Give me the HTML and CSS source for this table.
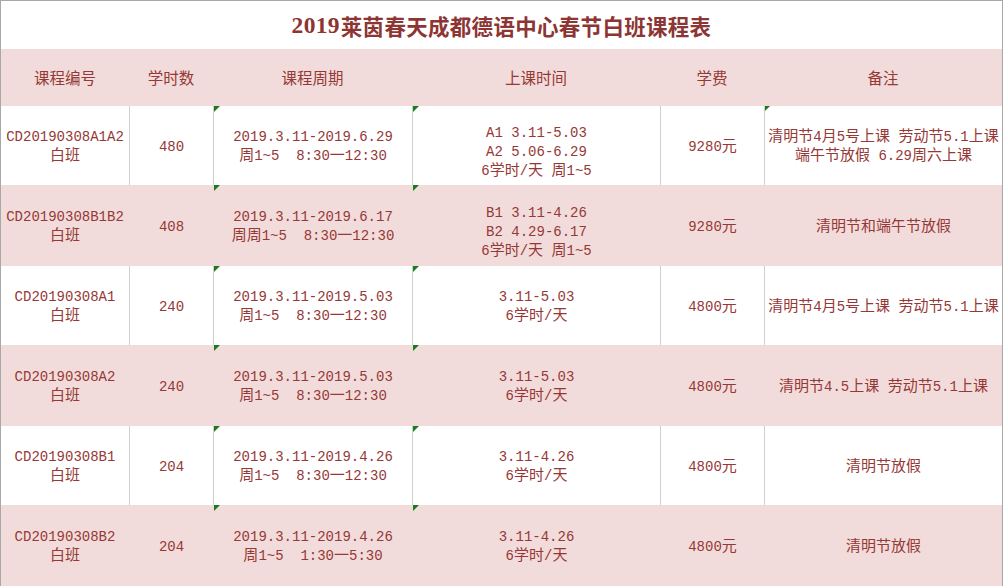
FILE: index.html
```html
<!DOCTYPE html>
<html lang="zh-CN">
<head>
<meta charset="utf-8">
<title>2019莱茵春天成都德语中心春节白班课程表</title>
<link rel="stylesheet" href="styles.css">
</head>
<body>
<div class="sheet">
  <div class="title"><span class="num">2019</span>莱茵春天成都德语中心春节白班课程表</div>

  <div class="row head">
    <div class="cell">课程编号</div>
    <div class="cell">学时数</div>
    <div class="cell">课程周期</div>
    <div class="cell">上课时间</div>
    <div class="cell">学费</div>
    <div class="cell">备注</div>
  </div>

  <div class="row white r79">
    <div class="cell"><div>CD20190308A1A2</div><div><span class="c">白班</span></div></div>
    <div class="cell"><div>480</div></div>
    <div class="cell flag"><div>2019.3.11-2019.6.29</div><div><span class="c">周</span>1~5  8:30<span class="c">一</span>12:30</div></div>
    <div class="cell flag tri"><div>A1 3.11-5.03</div><div>A2 5.06-6.29</div><div>6<span class="c">学时</span>/<span class="c">天</span> <span class="c">周</span>1~5</div></div>
    <div class="cell"><div>9280<span class="c">元</span></div></div>
    <div class="cell flag small"><div><span class="c">清明节</span>4<span class="c">月</span>5<span class="c">号上课</span> <span class="c">劳动节</span>5.1<span class="c">上课</span></div><div><span class="c">端午节放假</span> 6.29<span class="c">周六上课</span></div></div>
  </div>

  <div class="row pink r81">
    <div class="cell"><div>CD20190308B1B2</div><div><span class="c">白班</span></div></div>
    <div class="cell"><div>408</div></div>
    <div class="cell flag"><div>2019.3.11-2019.6.17</div><div><span class="c">周周</span>1~5  8:30<span class="c">一</span>12:30</div></div>
    <div class="cell flag tri"><div>B1 3.11-4.26</div><div>B2 4.29-6.17</div><div>6<span class="c">学时</span>/<span class="c">天</span> <span class="c">周</span>1~5</div></div>
    <div class="cell"><div>9280<span class="c">元</span></div></div>
    <div class="cell"><div><span class="c">清明节和端午节放假</span></div></div>
  </div>

  <div class="row white r79">
    <div class="cell"><div>CD20190308A1</div><div><span class="c">白班</span></div></div>
    <div class="cell"><div>240</div></div>
    <div class="cell flag"><div>2019.3.11-2019.5.03</div><div><span class="c">周</span>1~5  8:30<span class="c">一</span>12:30</div></div>
    <div class="cell flag"><div>3.11-5.03</div><div>6<span class="c">学时</span>/<span class="c">天</span></div></div>
    <div class="cell"><div>4800<span class="c">元</span></div></div>
    <div class="cell"><div><span class="c">清明节</span>4<span class="c">月</span>5<span class="c">号上课</span> <span class="c">劳动节</span>5.1<span class="c">上课</span></div></div>
  </div>

  <div class="row pink r81">
    <div class="cell"><div>CD20190308A2</div><div><span class="c">白班</span></div></div>
    <div class="cell"><div>240</div></div>
    <div class="cell flag"><div>2019.3.11-2019.5.03</div><div><span class="c">周</span>1~5  8:30<span class="c">一</span>12:30</div></div>
    <div class="cell flag"><div>3.11-5.03</div><div>6<span class="c">学时</span>/<span class="c">天</span></div></div>
    <div class="cell"><div>4800<span class="c">元</span></div></div>
    <div class="cell"><div><span class="c">清明节</span>4.5<span class="c">上课</span> <span class="c">劳动节</span>5.1<span class="c">上课</span></div></div>
  </div>

  <div class="row white r79">
    <div class="cell"><div>CD20190308B1</div><div><span class="c">白班</span></div></div>
    <div class="cell"><div>204</div></div>
    <div class="cell flag"><div>2019.3.11-2019.4.26</div><div><span class="c">周</span>1~5  8:30<span class="c">一</span>12:30</div></div>
    <div class="cell flag"><div>3.11-4.26</div><div>6<span class="c">学时</span>/<span class="c">天</span></div></div>
    <div class="cell"><div>4800<span class="c">元</span></div></div>
    <div class="cell"><div><span class="c">清明节放假</span></div></div>
  </div>

  <div class="row pink r81">
    <div class="cell"><div>CD20190308B2</div><div><span class="c">白班</span></div></div>
    <div class="cell"><div>204</div></div>
    <div class="cell flag"><div>2019.3.11-2019.4.26</div><div><span class="c">周</span>1~5  1:30<span class="c">一</span>5:30</div></div>
    <div class="cell flag"><div>3.11-4.26</div><div>6<span class="c">学时</span>/<span class="c">天</span></div></div>
    <div class="cell"><div>4800<span class="c">元</span></div></div>
    <div class="cell"><div><span class="c">清明节放假</span></div></div>
  </div>
</div>
</body>
</html>
```

FILE: styles.css
```css
html, body {
  margin: 0;
  padding: 0;
  background: #ffffff;
}

.sheet {
  width: 1003px;
  box-sizing: border-box;
  border-top: 1px solid #a8a8a8;
  border-left: 1px solid #a8a8a8;
  border-right: 1px solid #a8a8a8;
  color: #963836;
  font-family: "Liberation Mono", "Noto Sans CJK SC", monospace;
  font-size: 14px;
  line-height: 19px;
}

.c {
  font-family: "Noto Sans CJK SC", sans-serif;
  font-size: 15px;
  line-height: 13px;
}

.title {
  height: 48px;
  display: flex;
  align-items: center;
  justify-content: center;
  font-family: "Noto Sans CJK SC", sans-serif;
  font-weight: bold;
  font-size: 21.5px;
  color: #8c3533;
  letter-spacing: 0.3px;
  padding-top: 1px;
  box-sizing: border-box;
}

.title .num {
  font-family: "Liberation Serif", serif;
  font-size: 23.5px;
  margin-right: 1px;
}

.row {
  display: grid;
  grid-template-columns: 128px 84px 199px 248px 104px 238px;
}

.head {
  height: 57px;
  background: #f2dcdb;
  font-family: "Noto Sans CJK SC", sans-serif;
  font-size: 15.5px;
}

.r79 { height: 79px; }
.r81 { height: 81px; }

.white { background: #ffffff; }
.pink { background: #f2dcdb; }

.cell {
  position: relative;
  display: flex;
  flex-direction: column;
  align-items: center;
  justify-content: center;
  text-align: center;
  white-space: pre;
  box-sizing: border-box;
}

.row:not(.head) .cell {
  padding-top: 3px;
}

.row .cell.tri {
  padding-top: 13px;
}

.white .cell + .cell {
  border-left: 1px solid #cfcfcf;
}

.pink .cell + .cell {
  border-left: 1px solid #f2dcdb;
}

.flag::before {
  content: "";
  position: absolute;
  left: 0;
  top: 0;
  width: 0;
  height: 0;
  border-top: 6px solid #1b7a1b;
  border-right: 6px solid transparent;
}

.flag.small::before {
  border-top-width: 5px;
  border-right-width: 5px;
}
```
